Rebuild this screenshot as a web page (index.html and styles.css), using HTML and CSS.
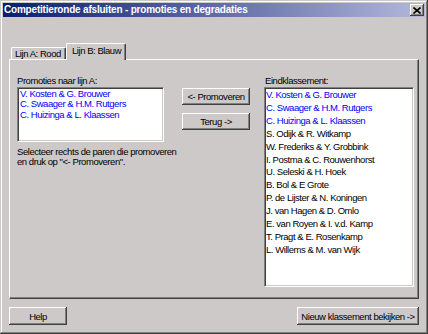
FILE: index.html
```html
<!DOCTYPE html>
<html lang="nl">
<head>
  <meta charset="UTF-8" />
  <title>Competitieronde afsluiten</title>
  <link rel="stylesheet" href="styles.css">
</head>
<body>
  <div class="venster">
    <!-- Titelbalk -->
    <div class="titelbalk">
      <span class="titel">Competitieronde afsluiten - promoties en degradaties</span>
      <button class="sluiten" aria-label="Sluiten">
        <svg width="8" height="7" viewBox="0 0 8 7">
          <path d="M0.5 0.5 L7.5 6.5 M7.5 0.5 L0.5 6.5" stroke="#000" stroke-width="1.6" fill="none" />
        </svg>
      </button>
    </div>

    <div class="inhoud">
      <!-- Tabbladen -->
      <div class="tabs">
        <div class="tab">Lijn A: Rood</div>
        <div class="tab actief">Lijn B: Blauw</div>
      </div>

      <div class="paneel">
        <div class="kolom links">
          <div class="label">Promoties naar lijn A:</div>
          <ul class="lijst kort">
            <li class="blauw">V. Kosten &amp; G. Brouwer</li>
            <li class="blauw">C. Swaager &amp; H.M. Rutgers</li>
            <li class="blauw">C. Huizinga &amp; L. Klaassen</li>
          </ul>
          <p class="uitleg">Selecteer rechts de paren die promoveren<br>en druk op "&lt;- Promoveren".</p>
        </div>

        <div class="kolom midden">
          <button class="knop">&lt;- Promoveren</button>
          <button class="knop">Terug -&gt;</button>
        </div>

        <div class="kolom rechts">
          <div class="label">Eindklassement:</div>
          <ul class="lijst lang">
            <li class="blauw">V. Kosten &amp; G. Brouwer</li>
            <li class="blauw">C. Swaager &amp; H.M. Rutgers</li>
            <li class="blauw">C. Huizinga &amp; L. Klaassen</li>
            <li>S. Odijk &amp; R. Witkamp</li>
            <li>W. Frederiks &amp; Y. Grobbink</li>
            <li>I. Postma &amp; C. Rouwenhorst</li>
            <li>U. Seleski &amp; H. Hoek</li>
            <li>B. Bol &amp; E Grote</li>
            <li>P. de Lijster &amp; N. Koningen</li>
            <li>J. van Hagen &amp; D. Omlo</li>
            <li>E. van Royen &amp; I. v.d. Kamp</li>
            <li>T. Pragt &amp; E. Rosenkamp</li>
            <li>L. Willems &amp; M. van Wijk</li>
          </ul>
        </div>
      </div>

      <!-- Knoppen onderaan -->
      <div class="onderbalk">
        <button class="knop help">Help</button>
        <button class="knop nieuw">Nieuw klassement bekijken -&gt;</button>
      </div>
    </div>
  </div>
</body>
</html>
```

FILE: styles.css
```css
* {
  margin: 0;
  padding: 0;
  box-sizing: border-box;
}
body {
  font-family: "Liberation Sans", Arial, sans-serif;
  font-size: 9.5px;
  letter-spacing: -0.45px;
  color: #000;
  background: #ccc9c8;
}
.venster {
  width: 428px;
  height: 334px;
  padding: 3px;
  background: #ccc9c8;
  box-shadow: inset -1px -1px #404040, inset 1px 1px #ccc9c8,
              inset -2px -2px #808080, inset 2px 2px #fff;
}

/* Titelbalk */
.titelbalk {
  height: 14px;
  display: flex;
  align-items: center;
  justify-content: space-between;
  padding: 0 1px 0 1px;
  background: linear-gradient(to right, #0a1e6e, #b4b8dc);
}
.titel {
  color: #fff;
  font-weight: bold;
  font-size: 10px;
  letter-spacing: -0.2px;
  line-height: 14px;
  white-space: nowrap;
}
.sluiten {
  width: 14px;
  height: 12px;
  display: flex;
  align-items: center;
  justify-content: center;
  background: #ccc9c8;
  border: none;
  box-shadow: inset -1px -1px #404040, inset 1px 1px #fff,
              inset -2px -2px #808080;
}

.inhoud {
  padding: 26px 6px 0;
}

/* Tabbladen */
.tabs {
  height: 16px;
  display: flex;
  align-items: flex-end;
  padding-left: 2px;
  position: relative;
  z-index: 1;
}
.tab {
  height: 12px;
  line-height: 11px;
  padding: 0 3px;
  width: 55px;
  white-space: nowrap;
  border-top: 1px solid #fff;
  border-left: 1px solid #fff;
  border-right: 1px solid #404040;
  border-radius: 2px 2px 0 0;
  box-shadow: inset -1px 0 #808080;
  background: #ccc9c8;
}
.tab.actief {
  width: 60px;
  height: 17px;
  margin-bottom: -1px;
  line-height: 13px;
  padding: 0 5px;
}

.paneel {
  height: 240px;
  display: flex;
  padding: 14px 4px 0 7px;
  border-top: 1px solid #fff;
  border-left: 1px solid #fff;
  border-right: 1px solid #404040;
  border-bottom: 1px solid #404040;
  box-shadow: inset -1px -1px #808080;
}
.label {
  line-height: 13px;
  white-space: nowrap;
}
.kolom.links {
  width: 147px;
}
.kolom.midden {
  width: 68px;
  margin: 14px 14px 0 18px;
  display: flex;
  flex-direction: column;
  gap: 8px;
}
.kolom.rechts {
  width: 150px;
}
.kolom.rechts .label {
  padding-left: 1px;
}

/* Keuzelijsten */
.lijst {
  list-style: none;
  background: #fff;
  border: 1px solid;
  border-color: #808080 #fff #fff #808080;
  box-shadow: inset 1px 1px #404040, inset -1px -1px #ccc9c8;
  overflow: hidden;
}
.lijst li {
  white-space: nowrap;
}
.lijst.kort {
  height: 55px;
  padding: 1px 1px 0 2px;
}
.lijst.kort li {
  line-height: 10.3px;
}
.lijst.lang {
  height: 200px;
  padding: 1px 1px 0 1px;
}
.lijst.lang li {
  line-height: 12.9px;
}
.blauw {
  color: #0000ff;
}
.uitleg {
  margin-top: 5px;
  line-height: 10.3px;
  white-space: nowrap;
}

/* Knoppen */
.knop {
  font: inherit;
  letter-spacing: inherit;
  color: #000;
  height: 17px;
  background: #ccc9c8;
  border: none;
  white-space: nowrap;
  box-shadow: inset -1px -1px #404040, inset 1px 1px #fff,
              inset -2px -2px #808080;
}
.onderbalk {
  margin-top: 8px;
  display: flex;
  justify-content: space-between;
}
.onderbalk .knop {
  height: 18px;
}
.knop.help {
  width: 58px;
}
.knop.nieuw {
  width: 122px;
}
```
